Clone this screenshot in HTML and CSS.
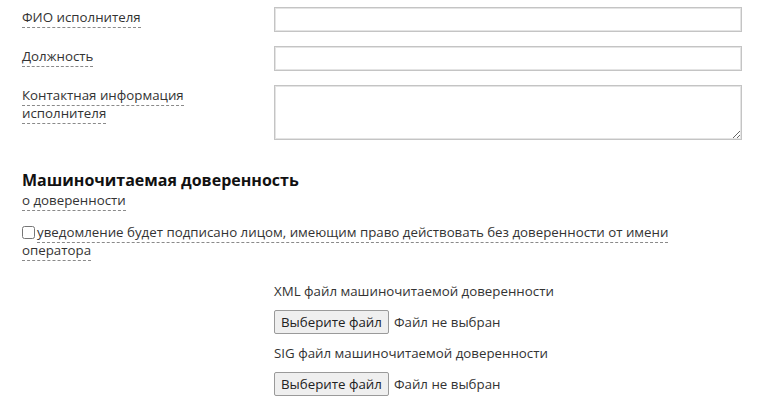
FILE: index.html
```html
<!DOCTYPE html>
<html lang="ru">
<head>
<meta charset="utf-8">
<link rel="stylesheet" href="styles.css">
</head>
<body>
<div class="page">
  <div class="row">
    <div class="label"><span class="hint">ФИО исполнителя</span></div>
    <div class="field"><input class="text-input" type="text"></div>
  </div>
  <div class="row">
    <div class="label"><span class="hint">Должность</span></div>
    <div class="field"><input class="text-input" type="text"></div>
  </div>
  <div class="row">
    <div class="label"><span class="hint">Контактная информация исполнителя</span></div>
    <div class="field"><textarea class="text-area"></textarea></div>
  </div>

  <h2 class="section-title">Машиночитаемая доверенность</h2>
  <div class="section-sub"><span class="hint">о доверенности</span></div>

  <div class="check-line">
    <input class="check" type="checkbox"><span class="hint">уведомление будет подписано лицом, имеющим право действовать без доверенности от имени оператора</span>
  </div>

  <div class="files">
    <div class="file-label">XML файл машиночитаемой доверенности</div>
    <div class="file-row"><span class="file-btn">Выберите файл</span><span class="file-state">Файл не выбран</span></div>
    <div class="file-label">SIG файл машиночитаемой доверенности</div>
    <div class="file-row"><span class="file-btn">Выберите файл</span><span class="file-state">Файл не выбран</span></div>
  </div>
</div>
</body>
</html>
```

FILE: styles.css
```css
html, body {
  margin: 0;
  padding: 0;
  background: #fff;
}
body {
  font-family: "Open Sans", "Liberation Sans", sans-serif;
  font-size: 13.3px;
  line-height: 18px;
  color: #333;
}
.page {
  padding: 7px 23px 0 22px;
  width: 720px;
}
.row {
  display: grid;
  grid-template-columns: 252px 468px;
  margin-bottom: 14px;
}
.label {
  padding-top: 1px;
  padding-right: 60px;
}
.hint {
  border-bottom: 1px dashed #8a8a8a;
  padding-bottom: 1px;
}
.text-input, .text-area {
  display: block;
  box-sizing: border-box;
  width: 468px;
  height: 25px;
  margin: 0;
  border: 1px solid #c4c4c4;
  box-shadow: inset 0 0 0 1px #e4e4e4;
  background: #fff;
  font: inherit;
  padding: 2px 4px;
}
.text-area {
  height: 55px;
  resize: vertical;
}
.section-title {
  margin: 29px 0 0;
  font-size: 16px;
  line-height: 22px;
  font-weight: 700;
  color: #111;
}
.section-sub {
  margin-top: 0;
}
.check-line {
  margin-top: 14px;
  max-width: 690px;
}
.check {
  width: 13px;
  height: 13px;
  margin: 0 2px 0 0;
  vertical-align: -2px;
}
.files {
  margin: 23px 0 0 252px;
}
.file-label {
  margin-bottom: 10px;
}
.file-row {
  display: flex;
  align-items: center;
  gap: 5px;
  margin-bottom: 10px;
}
.file-btn {
  box-sizing: border-box;
  height: 24px;
  padding: 2px 6px;
  border: 1px solid #9a9a9a;
  border-radius: 2px;
  background: #efefef;
  color: #222;
  line-height: 18px;
}
.file-state {
  color: #333;
}
```
